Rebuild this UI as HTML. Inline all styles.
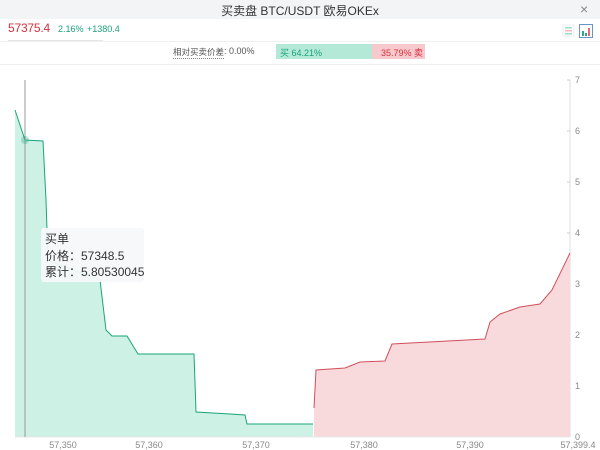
<!DOCTYPE html>
<html><head><meta charset="utf-8"><style>
*{margin:0;padding:0;box-sizing:border-box}
body{width:600px;height:450px;background:#fff;font-family:"Liberation Sans","Noto Sans CJK SC",sans-serif;position:relative;overflow:hidden}
.t{position:absolute;white-space:nowrap}
</style></head><body>
<div style="position:absolute;left:0;top:0;width:600px;height:19px;background:#f3f4f6"></div>
<div class="t" style="left:0;width:600px;top:2px;text-align:center;font-size:12px;color:#333">买卖盘 BTC/USDT 欧易OKEx</div>
<div class="t" style="left:580px;top:1px;font-size:14px;color:#888">×</div>
<div class="t" style="left:8px;top:21px;font-size:12px;color:#d5303e;letter-spacing:-0.2px">57375.4</div>
<div class="t" style="left:58px;top:24px;font-size:9px;color:#1aa37a">2.16%</div>
<div class="t" style="left:87px;top:24px;font-size:9px;color:#1aa37a">+1380.4</div>
<div style="position:absolute;left:8px;top:40px;width:95px;height:1px;background:#e5e5e5"></div>
<div style="position:absolute;left:0;top:41px;width:600px;height:1px;background:#f0f0f0"></div>
<svg style="position:absolute;left:562px;top:22px" width="34" height="18">
<rect x="1" y="3" width="11" height="11" fill="#fff" stroke="#eee"/>
<rect x="3" y="5" width="7" height="1.5" fill="#9fdcc6"/><rect x="3" y="8" width="7" height="1.5" fill="#f4b8bc"/><rect x="3" y="11" width="7" height="1.5" fill="#9fdcc6"/>
<rect x="17.5" y="2.5" width="13" height="13" fill="#fff" stroke="#6a93c8"/>
<rect x="20" y="9" width="2" height="5" fill="#2aab83"/><rect x="23" y="11" width="2" height="3" fill="#2aab83"/><rect x="26" y="6" width="2" height="8" fill="#e06b73"/>
</svg>
<div class="t" style="left:173px;top:46px;font-size:8.5px;color:#555;border-bottom:1px dotted #888">相对买卖价差</div>
<div class="t" style="left:224px;top:46px;font-size:9px;color:#555">: 0.00%</div>
<div style="position:absolute;left:276px;top:44px;width:96px;height:15px;background:#b5e9d7"></div>
<div style="position:absolute;left:372px;top:44px;width:53px;height:15px;background:#f8c9cc"></div>
<div class="t" style="left:280px;top:46px;font-size:9px;color:#1aa37a">买 64.21%</div>
<div class="t" style="left:381px;top:46px;font-size:9px;color:#d5303e">35.79% 卖</div>
<div style="position:absolute;left:0;top:64px;width:600px;height:1px;background:#eee"></div>
<svg style="position:absolute;left:0;top:0" width="600" height="450">
<line x1="570" y1="80" x2="570" y2="437" stroke="#ddd"/>
<g stroke="#ccc"><line x1="567" y1="80" x2="570" y2="80"/><line x1="567" y1="131" x2="570" y2="131"/><line x1="567" y1="182" x2="570" y2="182"/><line x1="567" y1="233" x2="570" y2="233"/><line x1="567" y1="284" x2="570" y2="284"/><line x1="567" y1="335" x2="570" y2="335"/><line x1="567" y1="386" x2="570" y2="386"/></g>
<g font-size="9" fill="#888" font-family="Liberation Sans,sans-serif"><text x="575" y="83">7</text><text x="575" y="134">6</text><text x="575" y="185">5</text><text x="575" y="236">4</text><text x="575" y="287">3</text><text x="575" y="338">2</text><text x="575" y="389">1</text><text x="575" y="440">0</text>
<text x="63" y="448" text-anchor="middle">57,350</text><text x="149" y="448" text-anchor="middle">57,360</text><text x="256" y="448" text-anchor="middle">57,370</text><text x="364" y="448" text-anchor="middle">57,380</text><text x="470" y="448" text-anchor="middle">57,390</text><text x="578" y="448" text-anchor="middle">57,399.4</text></g>
<path d="M15,110 L25,140 L43,141 L46,200 L48,260 L100,280 L106,330 L112,336 L127,336 L138,354 L194,354 L196,412 L230,414 L245,415 L247,424 L313,424 L313,437 L15,437Z" fill="#cdf1e4"/>
<path d="M15,110 L25,140 L43,141 L46,200 L48,260 L100,280 L106,330 L112,336 L127,336 L138,354 L194,354 L196,412 L230,414 L245,415 L247,424 L313,424" fill="none" stroke="#1aa37a"/>
<path d="M314,408 L316,370 L345,368 L360,362 L385,361 L392,344 L485,339 L490,322 L500,314 L520,307 L540,304 L552,290 L570,253 L570,437 L314,437Z" fill="#f9dadc"/>
<path d="M314,408 L316,370 L345,368 L360,362 L385,361 L392,344 L485,339 L490,322 L500,314 L520,307 L540,304 L552,290 L570,253" fill="none" stroke="#d0505c"/>
<line x1="15" y1="437" x2="570" y2="437" stroke="#e8e8e8"/>
<line x1="25" y1="80" x2="25" y2="437" stroke="#999"/>
<circle cx="25" cy="140" r="4" fill="#1aa37a" opacity=".3"/>
<rect x="41" y="228" width="103" height="54" rx="3" fill="#f5f8fa" opacity=".95"/>
<g font-size="12" fill="#333" font-family="Liberation Sans,Noto Sans CJK SC,sans-serif"><text x="45" y="243">买单</text><text x="45" y="260">价格：57348.5</text><text x="45" y="276">累计：5.80530045</text></g>
</svg>
</body></html>
